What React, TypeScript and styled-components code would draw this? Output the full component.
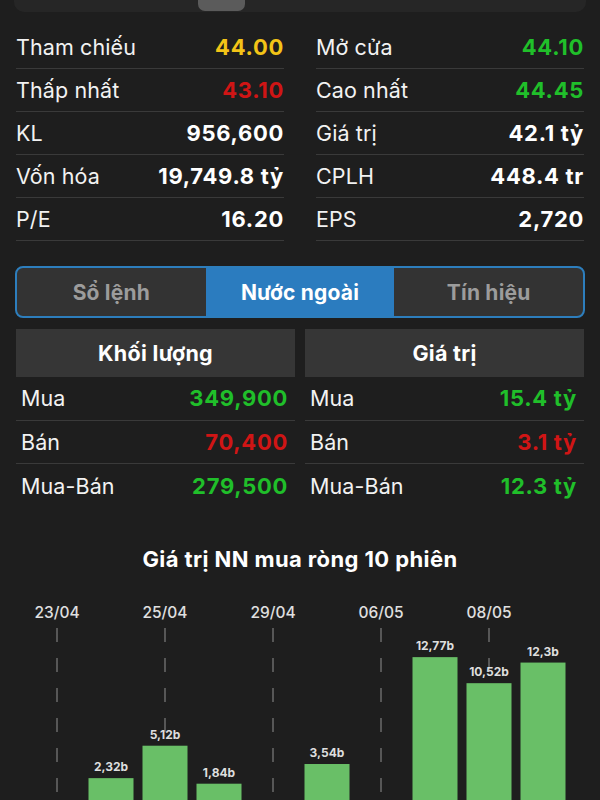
import React from 'react';
import styled, { createGlobalStyle } from 'styled-components';

const GlobalStyle = createGlobalStyle`
  html, body {
    margin: 0;
    padding: 0;
    background: #1e1e1e;
    font-family: Inter, "Noto Sans", "Liberation Sans", sans-serif;
    color: #fff;
  }
  * { box-sizing: border-box; }
`;

const Page = styled.div`
  width: 600px;
  height: 800px;
  overflow: hidden;
  background: #1e1e1e;
`;

const RangeBar = styled.div`
  margin: -28px 14px 0 14px;
  height: 40px;
  border-radius: 10px;
  background: #262626;
  display: flex;
  align-items: flex-end;
  padding: 0 0 1px 184px;
`;

const RangeThumb = styled.div`
  width: 47px;
  height: 36px;
  border-radius: 7px;
  background: #5b5b5b;
`;

const StatsGrid = styled.div`
  display: grid;
  grid-template-columns: 1fr 1fr;
  column-gap: 32px;
  padding: 0 16px;
  margin-top: 14px;
`;

const StatRow = styled.div`
  display: flex;
  justify-content: space-between;
  align-items: center;
  height: 43px;
  border-bottom: 1px solid #3a3a3a;
`;

const Label = styled.span`
  font-size: 21.5px;
  font-weight: 400;
  color: #f2f2f2;
  letter-spacing: 0.1px;
`;

const Value = styled.span<{ $tone?: string }>`
  font-size: 22px;
  font-weight: 700;
  color: ${p => p.$tone || '#fff'};
  letter-spacing: 0.7px;
`;

const Tabs = styled.div`
  margin: 25px 15px 0 15px;
  height: 52px;
  display: grid;
  grid-template-columns: 1fr 1fr 1fr;
  border: 2px solid #2d7ebd;
  border-radius: 8px;
  overflow: hidden;
  background: #333333;
`;

const Tab = styled.div<{ $active?: boolean }>`
  display: flex;
  align-items: center;
  justify-content: center;
  font-size: 21px;
  font-weight: 700;
  letter-spacing: 0.2px;
  color: ${p => (p.$active ? '#ffffff' : '#9c9c9c')};
  background: ${p => (p.$active ? '#2b7cbf' : 'transparent')};
`;

const ForeignGrid = styled.div`
  display: grid;
  grid-template-columns: 1fr 1fr;
  column-gap: 10px;
  padding: 0 16px;
  margin-top: 11px;
`;

const TableHead = styled.div`
  height: 48px;
  background: #363636;
  display: flex;
  align-items: center;
  justify-content: center;
  font-size: 21.5px;
  font-weight: 700;
  letter-spacing: 0.3px;
  color: #fff;
`;

const TableRow = styled.div<{ $last?: boolean }>`
  display: flex;
  justify-content: space-between;
  align-items: center;
  height: 43.5px;
  padding: 0 7px 0 5px;
  border-bottom: ${p => (p.$last ? 'none' : '1px solid #3a3a3a')};
`;

const ChartTitle = styled.div`
  margin-top: 38px;
  text-align: center;
  font-size: 22px;
  font-weight: 700;
  letter-spacing: 0.4px;
  color: #fff;
`;

const ChartSvg = styled.svg`
  display: block;
  margin-top: 19px;
`;

const YELLOW = '#f3c417';
const RED = '#d01515';
const GREEN = '#20bf2a';

const stats: [string, string, string?][][] = [
  [['Tham chiếu', '44.00', YELLOW], ['Mở cửa', '44.10', GREEN]],
  [['Thấp nhất', '43.10', RED], ['Cao nhất', '44.45', GREEN]],
  [['KL', '956,600'], ['Giá trị', '42.1 tỷ']],
  [['Vốn hóa', '19,749.8 tỷ'], ['CPLH', '448.4 tr']],
  [['P/E', '16.20'], ['EPS', '2,720']],
];

const foreign = [
  {
    title: 'Khối lượng',
    rows: [['Mua', '349,900', GREEN], ['Bán', '70,400', RED], ['Mua-Bán', '279,500', GREEN]],
  },
  {
    title: 'Giá trị',
    rows: [['Mua', '15.4 tỷ', GREEN], ['Bán', '3.1 tỷ', RED], ['Mua-Bán', '12.3 tỷ', GREEN]],
  },
];

const sessions = [
  { date: '23/04', value: 0, text: '' },
  { date: '', value: 2.32, text: '2,32b' },
  { date: '25/04', value: 5.12, text: '5,12b' },
  { date: '', value: 1.84, text: '1,84b' },
  { date: '29/04', value: 0, text: '' },
  { date: '', value: 3.54, text: '3,54b' },
  { date: '06/05', value: 0, text: '' },
  { date: '', value: 12.77, text: '12,77b' },
  { date: '08/05', value: 10.52, text: '10,52b' },
  { date: '', value: 12.3, text: '12,3b' },
];

const NetBuyChart = () => {
  const base = 214;
  const scale = 11.58;
  const x0 = 57;
  const step = 54;
  return (
    <ChartSvg width={600} height={215} viewBox="0 0 600 215">
      {sessions.map((s, i) =>
        s.date ? (
          <g key={'d' + i}>
            <text
              x={x0 + step * i}
              y={27}
              textAnchor="middle"
              fontSize={15.5}
              fontWeight={500}
              fill="#e0e0e0"
              fontFamily="Inter, sans-serif"
            >
              {s.date}
            </text>
            <line
              x1={x0 + step * i}
              x2={x0 + step * i}
              y1={37}
              y2={215}
              stroke="#6b6b6b"
              strokeWidth={1.5}
              strokeDasharray="14 16"
            />
          </g>
        ) : null
      )}
      {sessions.map((s, i) => {
        if (!s.value) return null;
        const h = s.value * scale;
        const cx = x0 + step * i;
        return (
          <g key={'b' + i}>
            <rect x={cx - 22.5} y={base - h} width={45} height={h + 2} fill="#69bf67" />
            <text
              x={cx}
              y={base - h - 7}
              textAnchor="middle"
              fontSize={12}
              fontWeight={700}
              fill="#dedede"
              fontFamily="Inter, sans-serif"
            >
              {s.text}
            </text>
          </g>
        );
      })}
    </ChartSvg>
  );
};

export default function App() {
  return (
    <Page>
      <GlobalStyle />
      <RangeBar>
        <RangeThumb />
      </RangeBar>
      <StatsGrid>
        {stats.map((pair, r) =>
          pair.map(([label, value, tone], c) => (
            <StatRow key={r + '-' + c}>
              <Label>{label}</Label>
              <Value $tone={tone}>{value}</Value>
            </StatRow>
          ))
        )}
      </StatsGrid>
      <Tabs>
        <Tab>Sổ lệnh</Tab>
        <Tab $active>Nước ngoài</Tab>
        <Tab>Tín hiệu</Tab>
      </Tabs>
      <ForeignGrid>
        {foreign.map(t => (
          <div key={t.title}>
            <TableHead>{t.title}</TableHead>
            {t.rows.map(([label, value, tone], i) => (
              <TableRow key={label} $last={i === t.rows.length - 1}>
                <Label>{label}</Label>
                <Value $tone={tone}>{value}</Value>
              </TableRow>
            ))}
          </div>
        ))}
      </ForeignGrid>
      <ChartTitle>Giá trị NN mua ròng 10 phiên</ChartTitle>
      <NetBuyChart />
    </Page>
  );
}
